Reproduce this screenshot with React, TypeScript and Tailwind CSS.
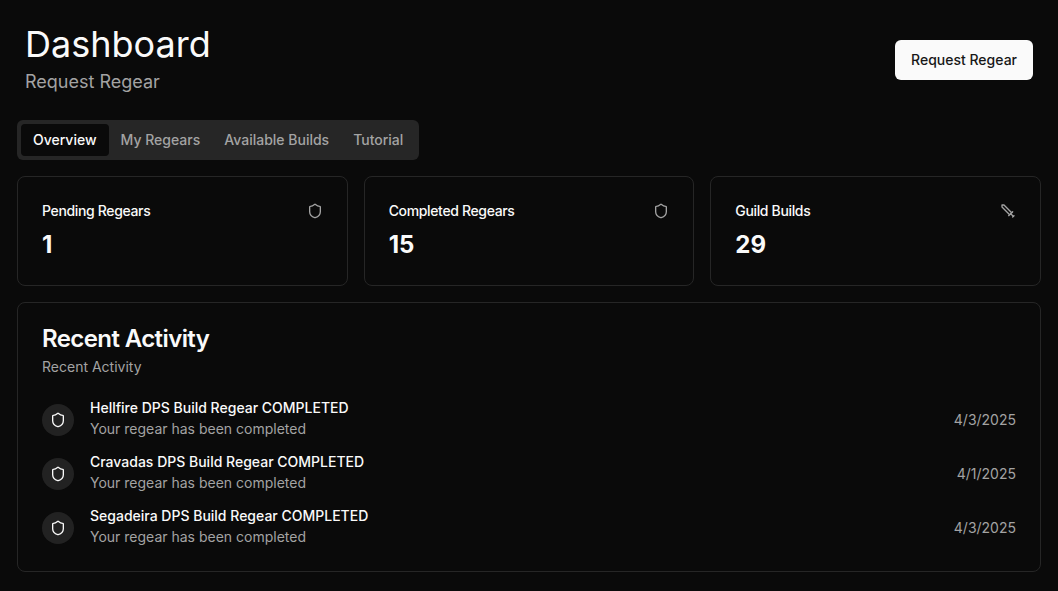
import React, { useState } from 'react';
import { Shield } from 'lucide-react';

const tabs = ['Overview', 'My Regears', 'Available Builds', 'Tutorial'];

// Sword with the blade pointing to the top left
function SwordIcon({ className }: { className?: string }) {
    return (
        <svg
            viewBox="0 0 24 24"
            fill="none"
            stroke="currentColor"
            strokeWidth="2"
            strokeLinecap="round"
            strokeLinejoin="round"
            aria-hidden="true"
            className={className}
        >
            <polyline points="14.5 17.5 3 6 3 3 6 3 17.5 14.5" />
            <line x1="13" x2="19" y1="19" y2="13" />
            <line x1="16" x2="20" y1="16" y2="20" />
            <line x1="19" x2="21" y1="21" y2="19" />
        </svg>
    );
}

const stats = [
    { title: 'Pending Regears', value: 1, icon: Shield },
    { title: 'Completed Regears', value: 15, icon: Shield },
    { title: 'Guild Builds', value: 29, icon: SwordIcon },
];

const activity = [
    { id: 1, title: 'Hellfire DPS Build Regear COMPLETED', date: '4/3/2025' },
    { id: 2, title: 'Cravadas DPS Build Regear COMPLETED', date: '4/1/2025' },
    { id: 3, title: 'Segadeira DPS Build Regear COMPLETED', date: '4/3/2025' },
];

type StatCardProps = {
    title: string;
    value: number;
    icon: React.ComponentType<{ className?: string }>;
};

function StatCard({ title, value, icon: Icon }: StatCardProps) {
    return (
        <div className="rounded-lg border border-[#262626] p-6">
            <div className="flex flex-row items-center justify-between pb-2">
                <h3 className="text-sm font-medium tracking-tight">{title}</h3>
                <Icon className="h-4 w-4 text-[#a3a3a3]" />
            </div>
            <div className="text-2xl font-bold">{value}</div>
        </div>
    );
}

export default function App() {
    const [active, setActive] = useState('Overview');

    return (
        <div className="min-h-screen bg-[#0a0a0a] px-[17px] pt-6 pb-4 font-['Inter',sans-serif] text-[#fafafa]">
            <header className="flex items-center justify-between px-2">
                <div className="grid gap-1">
                    <h1 className="text-4xl">Dashboard</h1>
                    <p className="text-lg text-[#a3a3a3]">Request Regear</p>
                </div>
                <button className="h-10 rounded-md bg-[#fafafa] px-4 text-sm font-medium text-[#171717]">Request Regear</button>
            </header>

            <main className="mt-6 space-y-4">
                <div role="tablist" className="inline-flex h-10 items-center rounded-md bg-[#262626] p-1 text-[#a3a3a3]">
                    {tabs.map((tab) => (
                        <button
                            key={tab}
                            role="tab"
                            aria-selected={active === tab}
                            onClick={() => setActive(tab)}
                            className={`rounded-sm px-3 py-1.5 text-sm font-medium ${active === tab ? 'bg-[#0a0a0a] text-[#fafafa]' : ''}`}
                        >
                            {tab}
                        </button>
                    ))}
                </div>

                <div className="grid grid-cols-3 gap-4">
                    {stats.map((stat) => (
                        <StatCard key={stat.title} {...stat} />
                    ))}
                </div>

                <section className="rounded-lg border border-[#262626] p-6">
                    <h2 className="text-2xl leading-6 font-semibold tracking-tight">Recent Activity</h2>
                    <p className="mt-1.5 text-sm text-[#a3a3a3]">Recent Activity</p>
                    <ul className="mt-6 space-y-4">
                        {activity.map((item) => (
                            <li key={item.id} className="flex items-center gap-4">
                                <div className="flex h-8 w-8 items-center justify-center rounded-full bg-[#222222]">
                                    <Shield className="h-4 w-4" />
                                </div>
                                <div className="flex-1 space-y-1">
                                    <p className="text-sm leading-none font-medium">{item.title}</p>
                                    <p className="text-sm text-[#a3a3a3]">Your regear has been completed</p>
                                </div>
                                <time className="text-sm text-[#a3a3a3]">{item.date}</time>
                            </li>
                        ))}
                    </ul>
                </section>
            </main>
        </div>
    );
}
